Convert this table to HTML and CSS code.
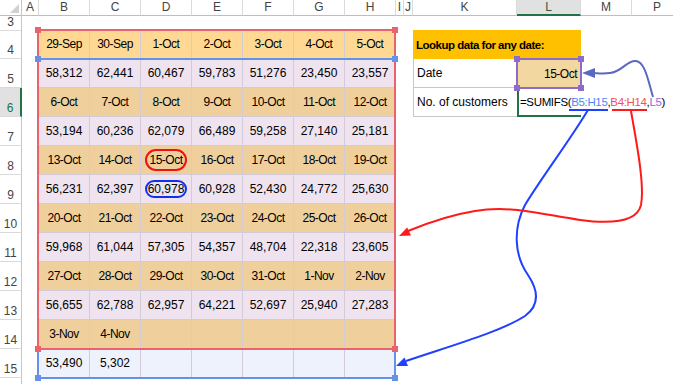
FILE: index.html
```html
<!DOCTYPE html>
<html>
<head>
<meta charset="utf-8">
<link rel="stylesheet" href="styles.css">
</head>
<body>
<div class="sheet">
  <div class="colhead">
    <div class="corner"><div class="tri"></div></div>
    <div>A</div><div>B</div><div>C</div><div>D</div><div>E</div><div>F</div><div>G</div><div>H</div>
    <div>I</div><div>J</div><div>K</div><div class="sel">L</div><div>M</div><div>P</div>
  </div>

  <div class="row short">
    <div class="rh">3</div><div class="blank"></div>
  </div>

  <div class="row">
    <div class="rh">4</div><div></div>
    <div class="c dt0">29-Sep</div><div class="c dt0">30-Sep</div><div class="c dt0">1-Oct</div><div class="c dt0">2-Oct</div><div class="c dt0">3-Oct</div><div class="c dt0">4-Oct</div><div class="c dt0">5-Oct</div>
    <div></div><div></div>
    <div class="lk-title">Lookup data for any date:</div>
    <div></div><div></div>
  </div>

  <div class="row">
    <div class="rh">5</div><div></div>
    <div class="c nm">58,312</div><div class="c nm">62,441</div><div class="c nm">60,467</div><div class="c nm">59,783</div><div class="c nm">51,276</div><div class="c nm">23,450</div><div class="c nm">23,557</div>
    <div></div><div></div>
    <div class="lk-label">Date</div>
    <div class="lk-date">15-Oct</div>
    <div></div><div></div>
  </div>

  <div class="row">
    <div class="rh sel">6</div><div></div>
    <div class="c dt">6-Oct</div><div class="c dt">7-Oct</div><div class="c dt">8-Oct</div><div class="c dt">9-Oct</div><div class="c dt">10-Oct</div><div class="c dt">11-Oct</div><div class="c dt">12-Oct</div>
    <div></div><div></div>
    <div class="lk-label">No. of customers</div>
    <div class="lk-formula">=SUMIFS(<span class="f-blue">B5:H15</span>,<span class="f-red">B4:H14</span>,<span class="f-purple">L5</span>)</div>
    <div></div><div></div>
  </div>

  <div class="row">
    <div class="rh">7</div><div></div>
    <div class="c nm">53,194</div><div class="c nm">60,236</div><div class="c nm">62,079</div><div class="c nm">66,489</div><div class="c nm">59,258</div><div class="c nm">27,140</div><div class="c nm">25,181</div>
    <div class="rest"></div>
  </div>

  <div class="row">
    <div class="rh">8</div><div></div>
    <div class="c dt">13-Oct</div><div class="c dt">14-Oct</div><div class="c dt"><span class="ring-red">15-Oct</span></div><div class="c dt">16-Oct</div><div class="c dt">17-Oct</div><div class="c dt">18-Oct</div><div class="c dt">19-Oct</div>
    <div class="rest"></div>
  </div>

  <div class="row">
    <div class="rh">9</div><div></div>
    <div class="c nm">56,231</div><div class="c nm">62,397</div><div class="c nm"><span class="ring-blue">60,978</span></div><div class="c nm">60,928</div><div class="c nm">52,430</div><div class="c nm">24,772</div><div class="c nm">25,630</div>
    <div class="rest"></div>
  </div>

  <div class="row">
    <div class="rh">10</div><div></div>
    <div class="c dt">20-Oct</div><div class="c dt">21-Oct</div><div class="c dt">22-Oct</div><div class="c dt">23-Oct</div><div class="c dt">24-Oct</div><div class="c dt">25-Oct</div><div class="c dt">26-Oct</div>
    <div class="rest"></div>
  </div>

  <div class="row">
    <div class="rh">11</div><div></div>
    <div class="c nm">59,968</div><div class="c nm">61,044</div><div class="c nm">57,305</div><div class="c nm">54,357</div><div class="c nm">48,704</div><div class="c nm">22,318</div><div class="c nm">23,605</div>
    <div class="rest"></div>
  </div>

  <div class="row">
    <div class="rh">12</div><div></div>
    <div class="c dt">27-Oct</div><div class="c dt">28-Oct</div><div class="c dt">29-Oct</div><div class="c dt">30-Oct</div><div class="c dt">31-Oct</div><div class="c dt">1-Nov</div><div class="c dt">2-Nov</div>
    <div class="rest"></div>
  </div>

  <div class="row">
    <div class="rh">13</div><div></div>
    <div class="c nm">56,655</div><div class="c nm">62,788</div><div class="c nm">62,957</div><div class="c nm">64,221</div><div class="c nm">52,697</div><div class="c nm">25,940</div><div class="c nm">27,283</div>
    <div class="rest"></div>
  </div>

  <div class="row">
    <div class="rh">14</div><div></div>
    <div class="c dt">3-Nov</div><div class="c dt">4-Nov</div><div class="c dt"></div><div class="c dt"></div><div class="c dt"></div><div class="c dt"></div><div class="c dt"></div>
    <div class="rest"></div>
  </div>

  <div class="row">
    <div class="rh">15</div><div></div>
    <div class="c tot">53,490</div><div class="c tot">5,302</div><div class="c tot"></div><div class="c tot"></div><div class="c tot"></div><div class="c tot"></div><div class="c tot"></div>
    <div class="rest"></div>
  </div>

  <div class="row">
    <div class="rh"></div><div class="blank"></div>
  </div>

  <!-- range highlight overlays -->
  <div class="rng rng-blue"></div>
  <div class="rng rng-red"></div>
  <div class="rng rng-purple"></div>

  <div class="hdl h-red" style="left:35px;top:27px"></div>
  <div class="hdl h-red" style="left:392px;top:27px"></div>
  <div class="hdl h-red" style="left:35px;top:346px"></div>
  <div class="hdl h-red" style="left:392px;top:346px"></div>
  <div class="hdl h-blue" style="left:35px;top:56px"></div>
  <div class="hdl h-blue" style="left:392px;top:56px"></div>
  <div class="hdl h-blue" style="left:35px;top:375px"></div>
  <div class="hdl h-blue" style="left:392px;top:375px"></div>
  <div class="hdl h-purple" style="left:514px;top:56px"></div>
  <div class="hdl h-purple" style="left:578px;top:56px"></div>
  <div class="hdl h-purple" style="left:514px;top:85px"></div>
  <div class="hdl h-purple" style="left:578px;top:85px"></div>

  <svg class="arrows" width="673" height="384" viewBox="0 0 673 384">
    <line x1="569" y1="110" x2="608" y2="110" stroke="#1f40ff" stroke-width="2"/>
    <line x1="612" y1="110" x2="647" y2="110" stroke="#ff1a1a" stroke-width="2"/>
    <path d="M588,110 C570,140 540,180 525,205 C513,228 514,255 528,275 C538,290 540,305 525,316 C500,332 450,346 406,361" fill="none" stroke="#1f40ff" stroke-width="2"/>
    <polygon points="396,366 408,366 404.5,357.5" fill="#1f40ff"/>
    <path d="M631,111 C636,140 645,185 641,205 C637,222 610,224 580,220 C540,214 510,205 475,211 C450,215 425,224 408,231" fill="none" stroke="#ff1a1a" stroke-width="2"/>
    <polygon points="399,236 411,235.6 407.2,227.4" fill="#ff1a1a"/>
    <path d="M653,97 C648,80 645,62 636,61 C627,60 622,72 610,73 C602,74 597,73 592,73" fill="none" stroke="#5b68c2" stroke-width="2"/>
    <polygon points="582,73 595,68 595,78" fill="#5b68c2"/>
  </svg>
</div>
</body>
</html>
```

FILE: styles.css
```css
* { box-sizing: border-box; }

html, body {
  margin: 0;
  padding: 0;
  background: #ffffff;
}

body {
  font-family: "Liberation Sans", Arial, sans-serif;
  font-size: 12px;
  color: #000;
}

.sheet {
  --cols: 22px 17px 51px 51px 51px 51px 51px 51px 51px 8px 9px 104px 64px 51px 51px;
  position: relative;
  width: 673px;
  height: 384px;
  overflow: hidden;
}

.colhead {
  display: grid;
  grid-template-columns: var(--cols);
  height: 15px;
}

.colhead > div {
  border-right: 1px solid #dadada;
  border-bottom: 1px solid #bdbdbd;
  text-align: center;
  line-height: 14px;
  color: #444;
  font-size: 12px;
}

.colhead > .sel {
  background: #e1e1e1;
  border-bottom: 2px solid #217346;
  color: #2b5a3d;
}

.colhead > .corner {
  display: flex;
  justify-content: flex-end;
  align-items: flex-end;
  padding: 0 2px 2px 0;
  border-right: 1px solid #c6c6c6;
}

.tri {
  width: 9px;
  height: 9px;
  background: #d0d0d0;
  clip-path: polygon(100% 0, 100% 100%, 0 100%);
}

.row {
  display: grid;
  grid-template-columns: var(--cols);
  height: 29px;
}

.row.short { height: 15px; }

.blank { grid-column: 2 / -1; }
.rest { grid-column: 10 / -1; }

.rh {
  border-right: 1px solid #c6c6c6;
  border-bottom: 1px solid #dadada;
  display: flex;
  align-items: flex-end;
  justify-content: center;
  padding-bottom: 1px;
  color: #444;
  font-size: 12px;
  line-height: 14px;
}

.rh.sel {
  background: #e1e1e1;
  border-right: 2px solid #217346;
  color: #217346;
}

.c {
  display: flex;
  align-items: center;
  justify-content: center;
  border-right: 1px solid #d3cbd6;
  border-bottom: 1px solid #d3cbd6;
  white-space: nowrap;
}

.dt0 { background: #ffd993; letter-spacing: -0.5px; }
.dt { background: #efd09c; letter-spacing: -0.5px; }
.nm { background: #eee3ee; }
.tot { background: #eef2fc; }

.ring-red {
  border: 2px solid #f01010;
  border-radius: 11px;
  padding: 2px 2px;
  line-height: 14px;
}

.ring-blue {
  border: 2px solid #1030f0;
  border-radius: 9px;
  padding: 0 1px;
  line-height: 14px;
}

.lk-title {
  grid-column: span 2;
  background: #ffc000;
  font-weight: bold;
  font-size: 11.5px;
  letter-spacing: -0.5px;
  display: flex;
  align-items: center;
  padding-left: 3px;
}

.lk-label {
  border-left: 1px solid #c8c8c8;
  border-bottom: 1px solid #c8c8c8;
  display: flex;
  align-items: center;
  padding-left: 3px;
}

.lk-date {
  background: #f2d8a0;
  display: flex;
  align-items: center;
  justify-content: flex-end;
  padding-right: 4px;
  letter-spacing: -0.5px;
}

.lk-formula {
  position: relative;
  z-index: 1;
  background: #ffffff;
  border-left: 2px solid #217346;
  border-bottom: 2px solid #217346;
  display: flex;
  align-items: center;
  padding-left: 1px;
  white-space: nowrap;
  overflow: visible;
  font-size: 11.5px;
  letter-spacing: -0.35px;
}

.f-blue { color: #4f86f7; }
.f-red { color: #f0505a; }
.f-purple { color: #9368d6; }

.rng {
  position: absolute;
  border: 2px solid;
  pointer-events: none;
  z-index: 2;
}

.rng-red {
  left: 37px;
  top: 29px;
  width: 359px;
  height: 321px;
  border-color: #e8636b;
}

.rng-blue {
  left: 37px;
  top: 58px;
  width: 359px;
  height: 321px;
  border-color: #6592e8;
}

.rng-purple {
  left: 516px;
  top: 58px;
  width: 66px;
  height: 31px;
  border-color: #8e6bc9;
}

.hdl {
  position: absolute;
  width: 6px;
  height: 6px;
  z-index: 3;
}

.h-red { background: #e8636b; }
.h-blue { background: #6592e8; }
.h-purple { background: #8e6bc9; }

.arrows {
  position: absolute;
  left: 0;
  top: 0;
  z-index: 4;
  pointer-events: none;
}
```
